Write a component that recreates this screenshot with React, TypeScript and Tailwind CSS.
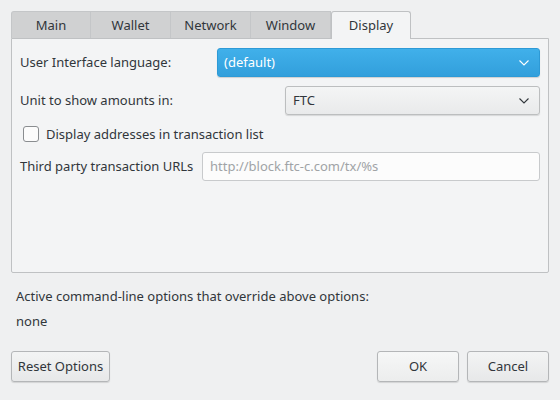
const tabs = ["Main", "Wallet", "Network", "Window", "Display"];

function Chevron({ className }: { className: string }) {
  return (
    <svg viewBox="0 0 10 6" className={className} fill="none">
      <path d="M0.5 0.5 L5 5 L9.5 0.5" stroke="currentColor" strokeWidth="1.1" />
    </svg>
  );
}

export default function App() {
  return (
    <div className="w-[560px] h-[400px] bg-[#eff0f1] px-[11px] pt-[11px] text-[13px] text-[#31363b] font-['Noto_Sans',sans-serif] flex flex-col">
      <div className="flex h-[27px] relative z-[1]">
        {tabs.map((tab) =>
          tab === "Display" ? (
            <div
              key={tab}
              className="w-[80px] h-[28px] pt-[1px] flex items-center justify-center bg-[#f3f4f5] border border-b-0 border-[#bfc1c3] rounded-t-[3px]"
            >
              {tab}
            </div>
          ) : (
            <div
              key={tab}
              className="w-[80px] h-[27px] pt-[2px] flex items-center justify-center bg-[#d0d1d2] border-r border-[#b8babc] first:rounded-tl-[3px] first:border-l first:border-t border-t border-[#c4c6c8]"
            >
              {tab}
            </div>
          )
        )}
      </div>
      <div className="h-[235px] border border-[#bfc1c3] bg-[#f3f4f5] rounded-b-[2px] px-[8px] pt-[9px] flex flex-col">
        <div className="flex items-center justify-between h-[29px]">
          <span className="pt-[1px]">User Interface language:</span>
          <div className="w-[323px] h-[29px] rounded-[3px] border border-[#2d9ad6] bg-gradient-to-b from-[#40b0ea] to-[#329fdc] text-white flex items-center justify-between pl-[6px] pr-[10px] shadow-[0_1px_1px_rgba(0,0,0,0.15)]">
            <span className="pt-[1px]">(default)</span>
            <Chevron className="w-[10px] h-[6px]" />
          </div>
        </div>
        <div className="flex items-center justify-between h-[29px] mt-[9px]">
          <span className="pt-[1px]">Unit to show amounts in:</span>
          <div className="w-[255px] h-[29px] rounded-[3px] border border-[#bcbebf] bg-gradient-to-b from-[#f4f5f5] to-[#e9eaeb] flex items-center justify-between pl-[7px] pr-[10px] shadow-[0_1px_1px_rgba(0,0,0,0.12)]">
            <span className="pt-[1px]">FTC</span>
            <Chevron className="w-[10px] h-[6px] text-[#31363b]" />
          </div>
        </div>
        <div className="flex items-center h-[20px] mt-[9px] pl-[3px]">
          <div className="w-[16px] h-[16px] rounded-[3px] border border-[#8a8d90] bg-[#fcfcfc]" />
          <span className="ml-[7px] pt-[1px]">Display addresses in transaction list</span>
        </div>
        <div className="flex items-center justify-between h-[29px] mt-[8px]">
          <span className="pt-[1px]">Third party transaction URLs</span>
          <div className="w-[338px] h-[29px] rounded-[3px] border border-[#c8cacc] bg-[#fcfcfc] flex items-center pl-[7px] pt-[1px] text-[#a0a3a6]">
            http://block.ftc-c.com/tx/%s
          </div>
        </div>
      </div>
      <div className="pl-[5px] mt-[14px] h-[20px] flex items-center">
        Active command-line options that override above options:
      </div>
      <div className="pl-[5px] mt-[5px] h-[20px] flex items-center">none</div>
      <div className="flex justify-between mt-[19px]">
        <button className="w-[99px] h-[31px] pt-[1px] rounded-[3px] border border-[#b4b6b8] bg-gradient-to-b from-[#f3f4f4] to-[#e7e8e9] shadow-[0_1px_1px_rgba(0,0,0,0.12)]">
          Reset Options
        </button>
        <div className="flex gap-[8px]">
          <button className="w-[82px] h-[31px] pt-[1px] rounded-[3px] border border-[#b4b6b8] bg-gradient-to-b from-[#f6f7f7] to-[#eceded] shadow-[0_1px_1px_rgba(0,0,0,0.12)]">
            OK
          </button>
          <button className="w-[82px] h-[31px] pt-[1px] rounded-[3px] border border-[#b4b6b8] bg-gradient-to-b from-[#f3f4f4] to-[#e7e8e9] shadow-[0_1px_1px_rgba(0,0,0,0.12)]">
            Cancel
          </button>
        </div>
      </div>
    </div>
  );
}
